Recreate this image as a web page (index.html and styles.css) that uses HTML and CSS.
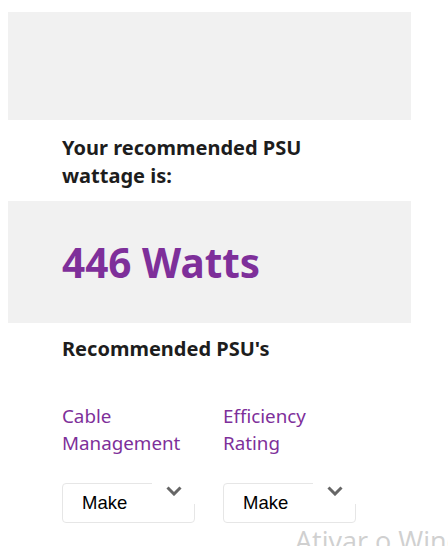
FILE: index.html
```html
<!DOCTYPE html>
<html lang="en">
<head>
  <meta charset="UTF-8">
  <title>PSU Calculator</title>
  <link rel="stylesheet" href="styles.css">
</head>
<body>
<div class="page">
    <div class="banner"></div>

    <h2 class="result-title">Your recommended PSU wattage is:</h2>

    <div class="result-box">
        <span class="watts">446 Watts</span>
    </div>

    <h3 class="list-title">Recommended PSU's</h3>

    <div class="filters">
        <div class="filter">
            <label>Cable Management</label>
            <div class="select">
                <span>Make</span>
                <span class="arrow">
                    <svg width="16" height="10" viewBox="0 0 16 10"><path d="M1.5 1.5 L8 8 L14.5 1.5" fill="none" stroke="#666" stroke-width="3"/></svg>
                </span>
            </div>
        </div>
        <div class="filter">
            <label>Efficiency Rating</label>
            <div class="select">
                <span>Make</span>
                <span class="arrow">
                    <svg width="16" height="10" viewBox="0 0 16 10"><path d="M1.5 1.5 L8 8 L14.5 1.5" fill="none" stroke="#666" stroke-width="3"/></svg>
                </span>
            </div>
        </div>
    </div>
</div>
<div class="watermark">Ativar o Windows</div>
</body>
</html>
```

FILE: styles.css
```css
body {
  margin: 0;
  padding: 12px 8px 0;
  font-family: "Noto Sans", sans-serif;
  background: #fff;
  color: #1d1d1d;
  overflow: hidden;
}
.page {
  width: 403px;
}
.banner {
  height: 108px;
  background: #f1f1f1;
}
.result-title {
  margin: 0;
  padding: 14px 54px 0;
  font-size: 20px;
  line-height: 28px;
  font-weight: 700;
  height: 67px;
}
.result-box {
  background: #f1f1f1;
  height: 122px;
  padding-left: 54px;
  display: flex;
  align-items: center;
}
.watts {
  color: #7e2f9a;
  font-size: 40.5px;
  font-weight: 700;
}
.list-title {
  margin: 0;
  padding: 12px 54px 0;
  font-size: 20px;
  line-height: 28px;
  font-weight: 700;
}
.filters {
  display: flex;
  gap: 28px;
  padding: 40px 54px 0;
}
.filter {
  width: 133px;
}
.filter label {
  display: block;
  color: #7e2f9a;
  font-size: 18.8px;
  line-height: 27px;
  height: 54px;
}
.select {
  position: relative;
  margin-top: 26px;
  height: 38px;
  border: 1px solid #e6e6e6;
  border-radius: 4px;
  display: flex;
  align-items: center;
  padding-left: 19px;
  font-family: "Liberation Sans", Arial, sans-serif;
  font-size: 18.5px;
  color: #000;
}
.arrow {
  position: absolute;
  top: -1px;
  right: -1px;
  width: 43px;
  height: 18px;
  background: #fff;
  display: flex;
  justify-content: center;
  padding-top: 3px;
}
.watermark {
  position: absolute;
  left: 295px;
  top: 522px;
  font-family: "Open Sans", sans-serif;
  font-size: 27px;
  color: #d0d0d0;
  white-space: nowrap;
}
```
